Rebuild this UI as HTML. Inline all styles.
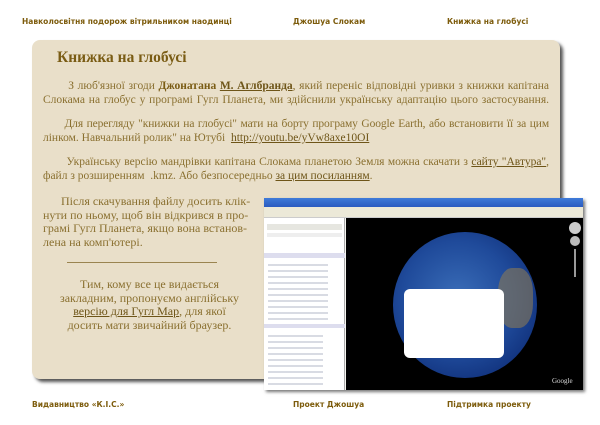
<!DOCTYPE html>
<html><head><meta charset="utf-8"><style>
*{margin:0;padding:0;box-sizing:border-box}
body{width:600px;height:425px;background:#fff;position:relative;overflow:hidden;font-family:"Liberation Serif",serif}
.nav{position:absolute;font-family:"DejaVu Sans","Liberation Sans",sans-serif;font-weight:bold;font-size:7.5px;color:#7d5c0c;white-space:nowrap}
.panel{position:absolute;left:32px;top:40px;width:528px;height:339px;background:#e9dfc9;border-radius:8px;box-shadow:3px 3px 3px #555}
.t{position:absolute;color:#8a7030;font-size:11.6px;line-height:14px;white-space:nowrap}
.p{position:absolute;left:43px;width:506px;color:#8a7030;font-size:11.5px;line-height:14px}
.p span{display:block;white-space:nowrap;height:14px;overflow:hidden}
.p .j{text-align:justify;text-align-last:justify;white-space:normal}
u{color:#6e5518;text-decoration:underline}
h1{position:absolute;left:57px;top:49px;font-size:15.5px;color:#7a5c14;font-weight:bold}
</style></head><body>
<div class="nav" style="left:22px;top:17px">Навколосвітня подорож вітрильником наодинці</div>
<div class="nav" style="left:293px;top:17px">Джошуа Слокам</div>
<div class="nav" style="left:447px;top:17px">Книжка на глобусі</div>
<div class="panel"></div>
<h1>Книжка на глобусі</h1>
<div class="p" style="top:79px"><span class="j">&nbsp;&nbsp;&nbsp;&nbsp;&nbsp;&nbsp;&nbsp;З люб'язної згоди <b style="color:#7a5c14">Джонатана <u>М. Аглбранда</u></b>, який переніс відповідні уривки з книжки капітана</span><span class="j">Слокама на глобус у програмі Гугл Планета, ми здійснили українську адаптацію цього застосування.</span></div>
<div class="p" style="top:117px"><span class="j" style="word-spacing:-1px;letter-spacing:-0.1px">&nbsp;&nbsp;&nbsp;&nbsp;&nbsp;&nbsp;Для перегляду "книжки на глобусі" мати на борту програму Google Earth, або встановити її за цим</span><span>лінком. Навчальний ролик" на Ютубі &nbsp;<u>http://youtu.be/yVw8axe10OI</u></span></div>
<div class="p" style="top:155px"><span class="j">&nbsp;&nbsp;&nbsp;&nbsp;&nbsp;&nbsp;&nbsp;Українську версію мандрівки капітана Слокама планетою Земля можна скачати з <u>сайту "Автура"</u>,</span><span>файл з розширенням &nbsp;.kmz. Або безпосередньо <u>за цим посиланням</u>.</span></div>
<div class="t" style="left:43px;top:195px;line-height:13.5px;font-size:12px">&nbsp;&nbsp;&nbsp;&nbsp;&nbsp;&nbsp;Після скачування файлу досить клік-<br>нути по ньому, щоб він відкрився в про-<br>грамі Гугл Планета, якщо вона встанов-<br>лена на комп'ютері.</div>
<div style="position:absolute;left:67px;top:262px;width:150px;height:1px;background:#9a8450"></div>
<div class="t" style="left:43px;top:278px;width:213px;text-align:center;line-height:13.5px;font-size:12px">Тим, кому все це видається<br>закладним, пропонуємо англійську<br><u>версію для Гугл Map</u>, для якої<br>досить мати звичайний браузер.</div>
<!-- screenshot -->
<div style="position:absolute;left:264px;top:198px;width:319px;height:192px;background:#f4f4f0;box-shadow:2px 2px 3px #777;overflow:hidden">
 <div style="height:9px;background:linear-gradient(#3f7bd8,#2a5bc0)"></div>
 <div style="height:11px;background:#ece9d8;border-bottom:1px solid #ccc"></div>
 <div style="position:absolute;left:0;top:20px;width:81px;height:172px;background:#fff;border-right:1px solid #aaa"></div>
 <div style="position:absolute;left:3px;top:26px;width:75px;height:6px;background:#e6e6e0"></div>
 <div style="position:absolute;left:3px;top:35px;width:75px;height:4px;background:#eee"></div>
 <div style="position:absolute;left:0;top:55px;width:81px;height:5px;background:#dde"></div>
 <div style="position:absolute;left:4px;top:62px;width:60px;height:60px;background:repeating-linear-gradient(#fff 0 4px,#cfd2dc 4px 6px);opacity:.8"></div>
 <div style="position:absolute;left:0;top:126px;width:81px;height:4px;background:#dde"></div>
 <div style="position:absolute;left:4px;top:133px;width:55px;height:56px;background:repeating-linear-gradient(#fff 0 4px,#cfd2dc 4px 6px);opacity:.8"></div>
 <div style="position:absolute;left:82px;top:20px;width:237px;height:172px;background:#000"></div>
 <div style="position:absolute;left:129px;top:34px;width:144px;height:146px;border-radius:50%;background:radial-gradient(circle at 45% 45%,#3a6db8 0%,#1f4a9a 50%,#10307a 80%,#6a8ac8 100%)"></div>
 <div style="position:absolute;left:234px;top:70px;width:35px;height:60px;border-radius:40%;background:#8a7a55;opacity:.6"></div>
 <div style="position:absolute;left:140px;top:91px;width:100px;height:69px;background:#fff;border-radius:6px"></div>
 <div style="position:absolute;left:305px;top:24px;width:12px;height:12px;border-radius:50%;background:#ccc"></div>
 <div style="position:absolute;left:306px;top:38px;width:10px;height:10px;border-radius:50%;background:#bbb"></div>
 <div style="position:absolute;left:310px;top:51px;width:2px;height:28px;background:#999"></div>
 <div style="position:absolute;left:288px;top:179px;font-size:7px;color:#ddd">Google</div>
</div>
<div class="nav" style="left:32px;top:400px">Видавництво «К.І.С.»</div>
<div class="nav" style="left:293px;top:400px">Проект Джошуа</div>
<div class="nav" style="left:447px;top:400px">Підтримка проекту</div>
</body></html>
